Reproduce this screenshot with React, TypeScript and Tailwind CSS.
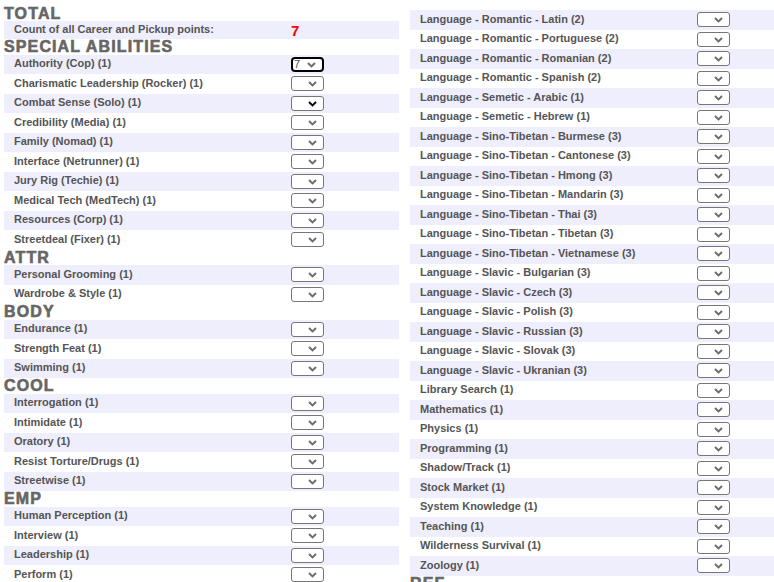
const left: { title: string; rows: string[] }[] = [
  {
    title: 'SPECIAL ABILITIES',
    rows: [
      'Authority (Cop) (1)',
      'Charismatic Leadership (Rocker) (1)',
      'Combat Sense (Solo) (1)',
      'Credibility (Media) (1)',
      'Family (Nomad) (1)',
      'Interface (Netrunner) (1)',
      'Jury Rig (Techie) (1)',
      'Medical Tech (MedTech) (1)',
      'Resources (Corp) (1)',
      'Streetdeal (Fixer) (1)',
    ],
  },
  { title: 'ATTR', rows: ['Personal Grooming (1)', 'Wardrobe & Style (1)'] },
  { title: 'BODY', rows: ['Endurance (1)', 'Strength Feat (1)', 'Swimming (1)'] },
  {
    title: 'COOL',
    rows: ['Interrogation (1)', 'Intimidate (1)', 'Oratory (1)', 'Resist Torture/Drugs (1)', 'Streetwise (1)'],
  },
  { title: 'EMP', rows: ['Human Perception (1)', 'Interview (1)', 'Leadership (1)', 'Perform (1)'] },
]

const right = [
  'Language - Romantic - Latin (2)',
  'Language - Romantic - Portuguese (2)',
  'Language - Romantic - Romanian (2)',
  'Language - Romantic - Spanish (2)',
  'Language - Semetic - Arabic (1)',
  'Language - Semetic - Hebrew (1)',
  'Language - Sino-Tibetan - Burmese (3)',
  'Language - Sino-Tibetan - Cantonese (3)',
  'Language - Sino-Tibetan - Hmong (3)',
  'Language - Sino-Tibetan - Mandarin (3)',
  'Language - Sino-Tibetan - Thai (3)',
  'Language - Sino-Tibetan - Tibetan (3)',
  'Language - Sino-Tibetan - Vietnamese (3)',
  'Language - Slavic - Bulgarian (3)',
  'Language - Slavic - Czech (3)',
  'Language - Slavic - Polish (3)',
  'Language - Slavic - Russian (3)',
  'Language - Slavic - Slovak (3)',
  'Language - Slavic - Ukranian (3)',
  'Library Search (1)',
  'Mathematics (1)',
  'Physics (1)',
  'Programming (1)',
  'Shadow/Track (1)',
  'Stock Market (1)',
  'System Knowledge (1)',
  'Teaching (1)',
  'Wilderness Survival (1)',
  'Zoology (1)',
]

function Chevron({ dark }: { dark?: boolean }) {
  return (
    <svg width="9" height="6" viewBox="0 0 9 6" className="ml-auto mr-[6px] mt-[1px]">
      <path d="M1 1 L4.5 4.5 L8 1" fill="none" stroke={dark ? '#000' : '#6b6b6b'} strokeWidth="1.9" />
    </svg>
  )
}

function Select({ value, focused, dark }: { value?: string; focused?: boolean; dark?: boolean }) {
  return (
    <div
      className={`flex items-center h-[15px] w-[33px] bg-white ${
        focused ? 'border-2 border-black rounded-[4px] pl-[1px]' : 'border border-[#767676] rounded-[3px] pl-[2px]'
      }`}
    >
      {value && <span className="text-[11px] leading-none text-[#555]">{value}</span>}
      <Chevron dark={dark} />
    </div>
  )
}

function Header({ children }: { children: string }) {
  return (
    <div className="h-[15.5px] leading-[15.5px] text-[16px] font-bold tracking-[0.07em] text-[#666] [-webkit-text-stroke:0.6px_#666] whitespace-nowrap">
      {children}
    </div>
  )
}

function Row({ label, band, value, focused, dark }: { label: string; band: boolean; value?: string; focused?: boolean; dark?: boolean }) {
  return (
    <div className={`flex items-center h-[19.5px] ${band ? 'bg-[#eeeefc]' : ''}`}>
      <span className="w-[287px] pl-[10px] pb-[2px] text-[11px] font-bold text-[#555] whitespace-nowrap">{label}</span>
      <Select value={value} focused={focused} dark={dark} />
    </div>
  )
}

export default function App() {
  return (
    <div className="h-[582px] w-[774px] overflow-hidden bg-white font-['Liberation_Sans',Arial,sans-serif]">
      <div className="flex gap-[11px] pl-[4px]">
        <div className="w-[395px] shrink-0 pt-[5.5px]">
          <Header>TOTAL</Header>
          <div className="flex items-center h-[18px] bg-[#eeeefc]">
            <span className="w-[287px] pl-[10px] pb-[1px] text-[11px] font-bold text-[#555]">Count of all Career and Pickup points:</span>
            <span className="text-[15px] font-bold text-[#ff0000] leading-none">7</span>
          </div>
          {left.map(s => (
            <div key={s.title}>
              <Header>{s.title}</Header>
              {s.rows.map((r, i) => (
                <Row
                  key={r}
                  label={r}
                  band={i % 2 === 0}
                  value={r.startsWith('Authority') ? '7' : undefined}
                  focused={r.startsWith('Authority')}
                  dark={r.startsWith('Combat')}
                />
              ))}
            </div>
          ))}
        </div>
        <div className="w-[395px] shrink-0 pt-[10px]">
          {right.map((r, i) => (
            <Row key={r} label={r} band={i % 2 === 0} />
          ))}
          <Header>REF</Header>
        </div>
      </div>
    </div>
  )
}
